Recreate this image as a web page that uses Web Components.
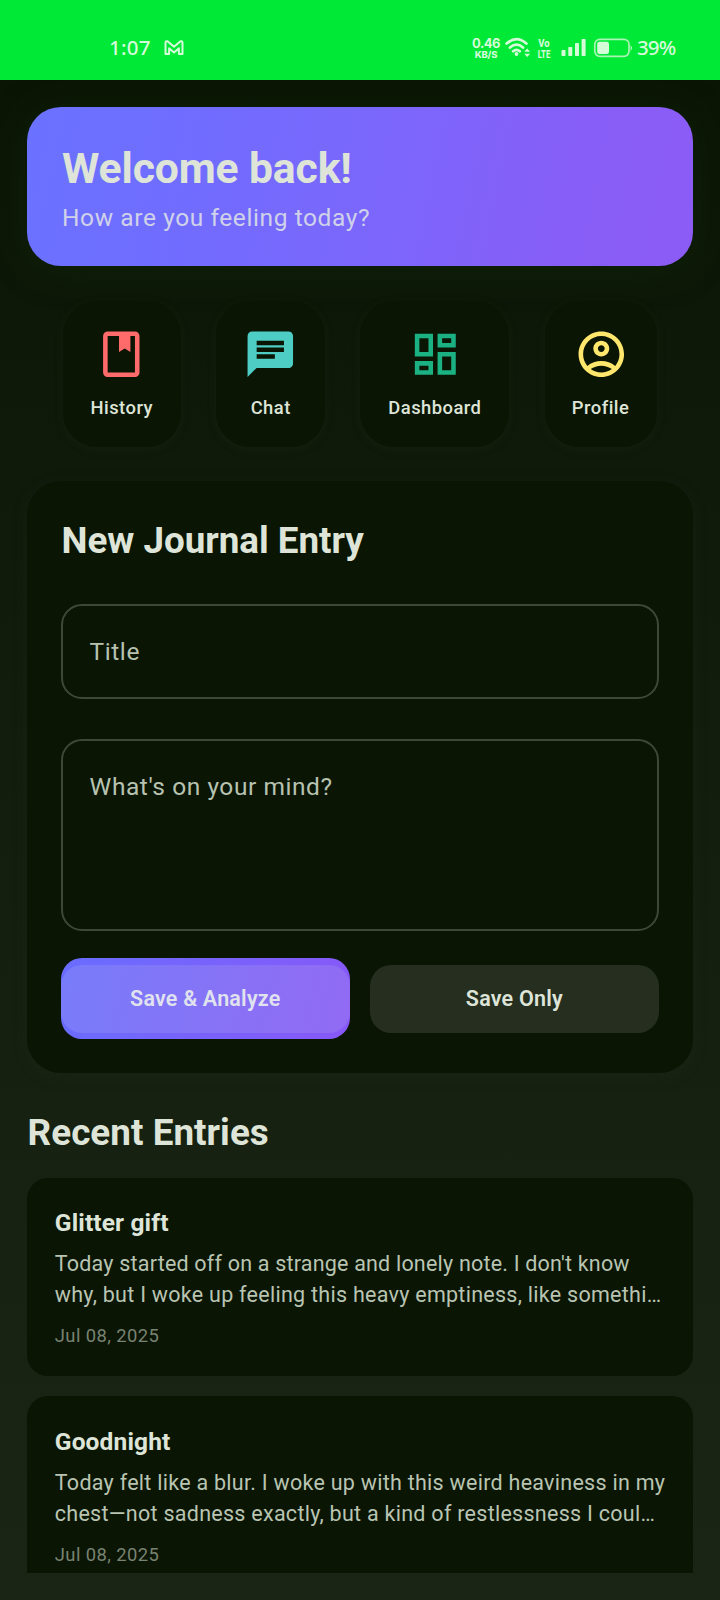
<!DOCTYPE html>
<html lang="en">
<head>
<meta charset="utf-8">
<title>Journal</title>
<style>
html,body{margin:0;padding:0;height:1600px;overflow:hidden;background:#1b2416;font-family:Roboto,"Noto Sans",sans-serif;color:#dee5d8}
</style>
</head>
<body>
<journal-app></journal-app>
<script>
const define = (name, html) => {
  const tpl = document.createElement('template');
  tpl.innerHTML = html;
  customElements.define(name, class extends HTMLElement {
    constructor() {
      super();
      this.attachShadow({mode: 'open'}).appendChild(tpl.content.cloneNode(true));
    }
  });
};

define('status-bar', `
<style>
:host{display:flex;align-items:flex-start;box-sizing:border-box;width:720px;height:80px;background:#00e936;color:#d5fbd9;font-family:"Noto Sans",sans-serif}
span,svg{display:block;flex:none;white-space:nowrap}
svg{height:80px}
.time{width:55px;margin-left:109px;padding-top:33px;font-size:20.5px;line-height:28px;font-weight:500;letter-spacing:.2px}
.net{width:32px;margin-left:286px;padding-top:37px;text-align:center;font-family:Inter,sans-serif}
.net b{display:block;font-size:13px;line-height:13px;font-weight:700;letter-spacing:-.5px}
.net i{display:block;font-style:normal;font-size:9.500px;line-height:10px;font-weight:800;letter-spacing:-.2px}
.lte{width:18px;margin-left:1px;padding-top:37.500px;text-align:center;font-family:Roboto,sans-serif;font-size:9.500px;line-height:11px}
.lte b,.lte i{display:block;font-style:normal;font-weight:800;transform:scale(.82,1.060);margin:0 -1px}
.lte b{transform:scale(1,1.060)}
.pct{margin-left:4px;padding-top:33px;font-size:20.500px;line-height:28px;font-weight:500;letter-spacing:-.9px}
</style>
<span class="time">1:07</span>
<svg width="20" height="80" viewBox="0 0 20 80" fill="none" stroke="#d5fbd9" stroke-width="2" stroke-linejoin="round"><path d="M1.500 54V42.500Q1.500 41.200 2.800 41.200H3.500L10 46.800L16.500 41.200H17.200Q18.500 41.200 18.500 42.500V54H14.900V48.300L10 52.500L5.100 48.300V54Z"/></svg>
<span class="net"><b>0.46</b><i>KB/S</i></span>
<svg width="32" height="80" viewBox="502 0 32 80" fill="none" stroke="#d5fbd9" stroke-width="2.700" stroke-linecap="round"><path d="M506.600 43.600Q516.500 34.800 526.400 43.600M510 47.500Q516.500 41.700 523 47.500M513.200 51.200Q516.500 48.400 519.800 51.200"/><circle cx="516.500" cy="54" r="1.900" fill="#d5fbd9" stroke="none"/><path d="M524.300 51.800L527.200 48.500L530.100 51.800ZM524.300 53.800L527.200 57.100L530.100 53.800Z" fill="#d5fbd9" stroke="none"/></svg>
<span class="lte"><b>Vo</b><i>LTE</i></span>
<svg width="80" height="80" viewBox="553 0 80 80" fill="#d5fbd9"><rect x="561.500" y="50" width="4" height="6" rx=".7"/><rect x="568.300" y="47" width="4" height="9" rx=".7"/><rect x="575" y="43" width="4" height="13" rx=".7"/><rect x="581.600" y="39" width="4" height="17" rx=".7"/><rect x="594.800" y="39.300" width="34.200" height="17" rx="5" fill="none" stroke="#a9f5b4" stroke-width="1.700"/><rect x="597.200" y="41.800" width="11.800" height="12.200" rx="2.300"/><path d="M630.600 45Q633 48 630.600 51.200Z"/></svg>
<span class="pct">39%</span>`);

define('welcome-card', `
<style>
:host{display:block;box-sizing:border-box;height:159px;padding:34px 35px 0;border-radius:34px;background:linear-gradient(102deg,#6b72ff 0%,#6f6dff 22%,#7c66fb 54%,#875ef7 82%,#8c5cf5 100%);box-shadow:0 3px 38px rgba(10,52,8,.36)}
h1{margin:0;font-size:42.7px;line-height:55px;font-weight:700;letter-spacing:-.13px;color:#dee5d8;white-space:nowrap}
p{margin:4px 0 0;font-size:24.500px;line-height:36px;letter-spacing:.59px;color:#cfd2e8;white-space:nowrap}
</style>
<h1><slot name="title"></slot></h1><p><slot></slot></p>`);

define('quick-action', `
<style>
:host{display:flex;flex-direction:column;align-items:center;box-sizing:border-box;height:146px;padding-top:26.900px;border-radius:34px;background:#0a1504;box-shadow:0 2px 9px rgba(32,46,25,.3)}
::slotted(svg){display:block;width:54.600px;height:54.600px;flex:none;margin-left:var(--nudge,0)}
span{margin-top:13.700px;font-size:18.400px;line-height:24.500px;font-weight:500;letter-spacing:.46px;white-space:nowrap}
</style>
<slot name="icon"></slot><span><slot></slot></span>`);

define('text-field', `
<style>
:host{display:block;box-sizing:border-box;border:2px solid #3d4838;border-radius:21px;padding:28.300px 26.600px 0;font-size:24.500px;line-height:36.800px;letter-spacing:.56px;color:#b7c2b0;white-space:nowrap}
</style><slot></slot>`);

define('action-button', `
<style>
:host{display:flex;align-items:center;justify-content:center;box-sizing:border-box;flex:1;height:68px;border-radius:21px;background:#252e1f;font-size:21.500px;font-weight:600;letter-spacing:.2px;line-height:30px;white-space:nowrap}
:host([primary]){height:81px;padding:6.500px 0;background:linear-gradient(104deg,#696dff,#8758f8)}
div{display:flex;align-items:center;justify-content:center;width:100%;height:68px;border-radius:21px}
:host([primary]) div{background:rgba(222,229,216,.13);color:#e0e3ee}
</style><div><slot></slot></div>`);

define('journal-form', `
<style>
:host{display:block;box-sizing:border-box;height:592px;padding:35.500px 34px 0;border-radius:34px;background:#0a1504;box-shadow:0 4px 14px rgba(31,43,25,.4)}
h2{margin:0 0 38.500px .500px;font-size:36.800px;line-height:49px;font-weight:700;letter-spacing:-.03px;white-space:nowrap}
.title{height:95px}
.body{height:192px;margin-top:40px}
.row{display:flex;align-items:center;gap:20.500px;height:81px;margin-top:27.500px;padding-right:.4px}
</style>
<h2>New Journal Entry</h2>
<text-field class="title">Title</text-field>
<text-field class="body">What's on your mind?</text-field>
<div class="row"><action-button primary>Save &amp; Analyze</action-button><action-button>Save Only</action-button></div>`);

define('entry-card', `
<style>
:host{display:block;box-sizing:border-box;height:198px;padding:27.500px 27px 0 27.800px;border-radius:21px;background:#0a1504}
h3{margin:0;font-size:24.500px;line-height:36.800px;font-weight:700;letter-spacing:.14px;white-space:nowrap}
.text{margin-top:7.500px;font-size:21.500px;line-height:30.800px;letter-spacing:.27px;color:#b9c4b2;white-space:nowrap}
.date{margin-top:13.300px;font-size:18.400px;line-height:24.500px;letter-spacing:.4px;color:#788272}
</style>
<h3><slot name="title"></slot></h3><div class="text"><slot></slot></div><div class="date"><slot name="date"></slot></div>`);

define('journal-app', `
<style>
:host{display:block;width:720px;height:1600px;overflow:hidden;background:linear-gradient(#0b1504 80px,#101a0b 470px,#172112 1120px,#1b2516 1600px)}
main{box-sizing:border-box;height:1492.500px;padding:27px 27px 0;overflow:hidden}
.actions{display:flex;gap:35.200px;margin:34.500px 0 34px 35.500px}
h2{margin:35.500px 0 20.500px .6px;font-size:36.800px;line-height:49px;font-weight:700;letter-spacing:.05px;white-space:nowrap}
entry-card + entry-card{margin-top:20.600px}
.tight{letter-spacing:.2px}
</style>
<status-bar></status-bar>
<main>
<welcome-card><span slot="title">Welcome back!</span>How are you feeling today?</welcome-card>
<div class="actions">
<quick-action style="width:118.500px"><svg slot="icon" viewBox="0 0 24 24" fill="#ff6b6b"><path d="M18 2H6c-1.100 0-2 .9-2 2v16c0 1.100.9 2 2 2h12c1.100 0 2-.9 2-2V4c0-1.100-.9-2-2-2zm0 18H6V4h5v7l2.500-1.500L16 11V4h2v16z"/></svg>History</quick-action>
<quick-action style="width:109px"><svg slot="icon" viewBox="0 0 24 24" fill="#4ecdc4"><path d="M20 2H4c-1.100 0-1.990.9-1.990 2L2 22l4-4h14c1.100 0 2-.9 2-2V4c0-1.100-.9-2-2-2zM6 9h12v2H6V9zm8 5H6v-2h8v2zm4-6H6V6h12v2z"/></svg>Chat</quick-action>
<quick-action style="width:149px;--nudge:1px"><svg slot="icon" viewBox="0 0 24 24" fill="#1bb183"><path d="M19 5v2h-4V5h4M9 5v6H5V5h4m10 8v6h-4v-6h4M9 17v2H5v-2h4M21 3h-8v6h8V3zM11 3H3v10h8V3zm10 8h-8v10h8V11zm-10 4H3v6h8v-6z"/></svg>Dashboard</quick-action>
<quick-action style="width:112px;--nudge:1.400px"><svg slot="icon" viewBox="0 0 24 24" fill="#ffe66d"><path d="M12 2C6.480 2 2 6.480 2 12s4.480 10 10 10 10-4.480 10-10S17.520 2 12 2zM7.350 18.500C8.660 17.560 10.260 17 12 17s3.340.56 4.650 1.500C15.340 19.440 13.740 20 12 20s-3.340-.56-4.650-1.500zm10.790-1.380C16.450 15.800 14.320 15 12 15s-4.450.8-6.140 2.120C4.700 15.730 4 13.950 4 12c0-4.420 3.580-8 8-8s8 3.580 8 8c0 1.950-.7 3.730-1.860 5.120z"/><path d="M12 6c-1.930 0-3.500 1.570-3.500 3.500S10.070 13 12 13s3.500-1.570 3.500-3.500S13.930 6 12 6zm0 5c-.83 0-1.500-.67-1.500-1.500S11.170 8 12 8s1.500.67 1.500 1.500S12.830 11 12 11z"/></svg>Profile</quick-action>
</div>
<journal-form></journal-form>
<h2>Recent Entries</h2>
<entry-card><span slot="title">Glitter gift</span><span class="tight">Today started off on a strange and lonely note. I don't know</span><br>why, but I woke up feeling this heavy emptiness, like somethi…<span slot="date">Jul 08, 2025</span></entry-card>
<entry-card><span slot="title">Goodnight</span>Today felt like a blur. I woke up with this weird heaviness in my<br>chest—not sadness exactly, but a kind of restlessness I coul…<span slot="date">Jul 08, 2025</span></entry-card>
</main>`);
</script>
</body>
</html>
